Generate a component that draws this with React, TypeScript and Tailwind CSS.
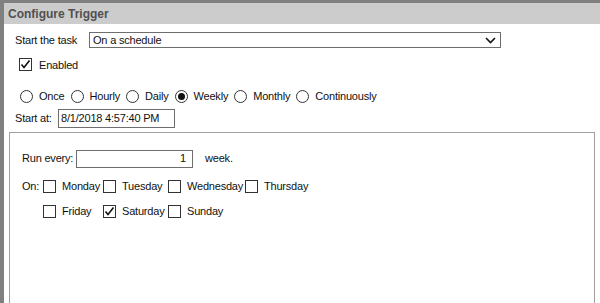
import type { ReactNode } from "react";

const FONT = "font-['Liberation_Sans',Arial,sans-serif]";

const Checkbox = ({ checked = false }: { checked?: boolean }) => (
  <span className="flex h-[13px] w-[13px] shrink-0 items-center justify-center border border-[#333] bg-white">
    {checked ? (
      <svg width="11" height="11" viewBox="0 0 11 11">
        <path d="M1.5 5.5 L4 8.5 L9.5 1.5" fill="none" stroke="#111" strokeWidth="1.6" />
      </svg>
    ) : null}
  </span>
);

const Radio = ({ checked = false }: { checked?: boolean }) => (
  <span className="flex h-[13px] w-[13px] shrink-0 items-center justify-center rounded-full border border-[#333] bg-white">
    {checked ? <span className="h-[7px] w-[7px] rounded-full bg-[#111]" /> : null}
  </span>
);

const Option = ({ children, checked }: { children: ReactNode; checked?: boolean }) => (
  <label className="flex items-center gap-[6px]">
    <Radio checked={checked} />
    <span>{children}</span>
  </label>
);

const Day = ({ name, checked }: { name: string; checked?: boolean }) => (
  <label className="flex items-center gap-[6px]">
    <Checkbox checked={checked} />
    <span>{name}</span>
  </label>
);

const schedules = ["Once", "Hourly", "Daily", "Weekly", "Monthly", "Continuously"];

export default function App() {
  return (
    <div className={`flex h-[303px] w-[600px] overflow-hidden bg-[#808080] pl-[4px] pt-[3px] ${FONT} text-[11px] tracking-[-0.2px] text-[#111]`}>
      <div className="flex flex-1 flex-col bg-white">
        <div className="flex h-[21px] items-center bg-[#cccccc] px-[4px] text-[12px] font-bold tracking-normal text-[#505050]">
          Configure Trigger
        </div>

        <div className="flex flex-1 flex-col px-[5px]">
          <div className="mt-[8px] flex items-center pl-[6px]">
            <span className="w-[74px]">Start the task</span>
            <div className="flex h-[16px] w-[412px] items-center justify-between border border-[#6e6e6e] pl-[3px] pr-[4px]">
              <span>On a schedule</span>
              <svg width="11" height="7" viewBox="0 0 11 7">
                <path d="M1 1 L5.5 5.5 L10 1" fill="none" stroke="#111" strokeWidth="1.6" />
              </svg>
            </div>
          </div>

          <label className="mt-[8px] flex items-center gap-[7px] pl-[10px]">
            <Checkbox checked />
            <span>Enabled</span>
          </label>

          <div className="mt-[15px] flex items-center gap-[6px] pl-[11px]">
            {schedules.map((s) => (
              <Option key={s} checked={s === "Weekly"}>
                {s}
              </Option>
            ))}
          </div>

          <div className="mt-[4px] flex items-center pl-[6px]">
            <span className="w-[43px]">Start at:</span>
            <div className="flex h-[19px] w-[117px] items-center border border-[#6e6e6e] px-[2px]">
              8/1/2018 4:57:40 PM
            </div>
          </div>

          <div className="mt-[4px] flex-1 border-l border-r border-t border-[#a0a0a0] pl-[12px] pt-[17px]">
            <div className="flex items-center">
              <span className="w-[54px]">Run every:</span>
              <div className="flex h-[18px] w-[117px] items-center justify-end border border-[#6e6e6e] px-[6px]">1</div>
              <span className="ml-[12px]">week.</span>
            </div>

            <div className="mt-[12px] flex leading-[13px]">
              <span className="w-[21px]">On:</span>
              <div className="grid grid-cols-[60px_65px_77px_auto] gap-y-[12px]">
                <Day name="Monday" />
                <Day name="Tuesday" />
                <Day name="Wednesday" />
                <Day name="Thursday" />
                <Day name="Friday" />
                <Day name="Saturday" checked />
                <Day name="Sunday" />
              </div>
            </div>
          </div>
        </div>
      </div>
    </div>
  );
}
